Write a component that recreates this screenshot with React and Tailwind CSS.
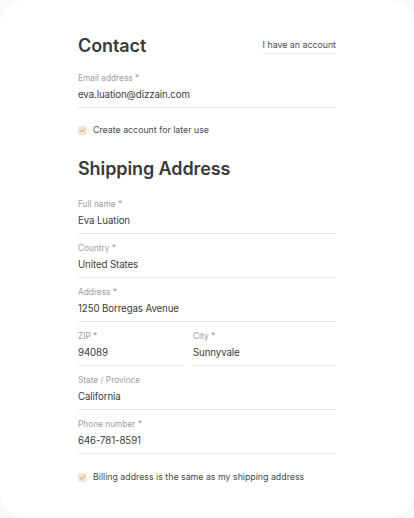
const font = { fontFamily: "Inter, 'Noto Sans', sans-serif" };

function Field({ label, value, className = "" }) {
  return (
    <div className={`flex flex-col border-b border-[#e8e8e8] pb-[4px] ${className}`}>
      <span className="text-[8.3px] leading-[12px] text-[#9d9d9d]">{label}</span>
      <span className="mt-[3px] text-[9.7px] leading-[16px] tracking-[-0.1px] text-[#3c3c3c]">{value}</span>
    </div>
  );
}

function Check({ label }) {
  return (
    <label className="flex items-center gap-[6px]">
      <span className="flex h-[9px] w-[9px] items-center justify-center rounded-[2px] bg-[#f3e5d1]">
        <svg viewBox="0 0 10 10" className="h-[7px] w-[7px]">
          <path d="M2 5.3 L4 7.3 L8 2.7" fill="none" stroke="#b59a76" strokeWidth="1.4" strokeLinecap="round" strokeLinejoin="round" />
        </svg>
      </span>
      <span className="text-[8.8px] leading-[14px] text-[#4a4a4a]">{label}</span>
    </label>
  );
}

export default function App() {
  return (
    <div className="min-h-screen bg-[#f9f9f9]" style={font}>
      <div className="min-h-[518px] rounded-[26px] bg-white px-[78px] pt-[33px]">
        <div className="flex items-center justify-between">
          <h1 className="text-[18px] font-semibold leading-[26px] tracking-[-0.1px] text-[#3a3a3a]">Contact</h1>
          <span className="border-b border-[#ededed] pb-[1px] text-[8.8px] leading-[14px] text-[#4a4a4a]">I have an account</span>
        </div>

        <Field className="mt-[13px]" label="Email address *" value="eva.luation@dizzain.com" />

        <div className="mt-[15px]">
          <Check label="Create account for later use" />
        </div>

        <h2 className="mt-[19px] text-[18px] font-semibold leading-[26px] tracking-[-0.1px] text-[#3a3a3a]">Shipping Address</h2>

        <div className="mt-[16px] flex flex-col gap-[8px]">
          <Field label="Full name *" value="Eva Luation" />
          <Field label="Country *" value="United States" />
          <Field label="Address *" value="1250 Borregas Avenue" />
          <div className="grid grid-cols-[105px_1fr] gap-[10px]">
            <Field label="ZIP *" value="94089" />
            <Field label="City *" value="Sunnyvale" />
          </div>
          <Field label="State / Province" value="California" />
          <Field label="Phone number *" value="646-781-8591" />
        </div>

        <div className="mt-[16px]">
          <Check label="Billing address is the same as my shipping address" />
        </div>
      </div>
    </div>
  );
}
